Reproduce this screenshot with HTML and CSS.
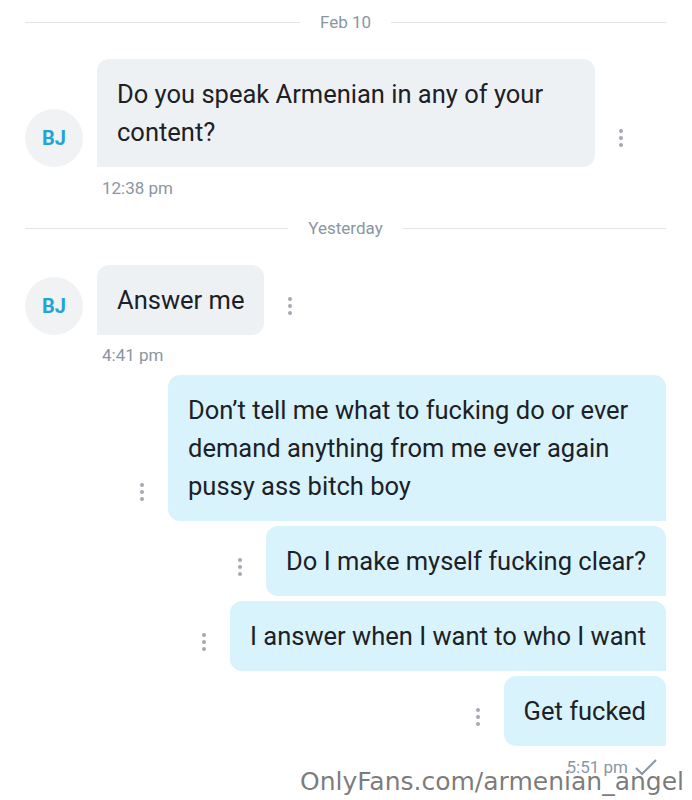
FILE: index.html
```html
<!DOCTYPE html>
<html>
<head>
  <title>Messages</title>
  <link rel="stylesheet" href="styles.css">
</head>
<body>
  <div class="screen">
    <div class="divider"><span>Feb 10</span></div>

    <div class="row in">
      <div class="avatar">BJ</div>
      <div class="bubble">Do you speak Armenian in any of your content?</div>
      <div class="more"><i></i><i></i><i></i></div>
    </div>
    <div class="time in-time">12:38 pm</div>

    <div class="divider"><span>Yesterday</span></div>

    <div class="row in">
      <div class="avatar">BJ</div>
      <div class="bubble">Answer me</div>
      <div class="more"><i></i><i></i><i></i></div>
    </div>
    <div class="time in-time short">4:41 pm</div>

    <div class="row out">
      <div class="more"><i></i><i></i><i></i></div>
      <div class="bubble">Don’t tell me what to fucking do or ever demand anything from me ever again pussy ass bitch boy</div>
    </div>
    <div class="row out">
      <div class="more"><i></i><i></i><i></i></div>
      <div class="bubble">Do I make myself fucking clear?</div>
    </div>
    <div class="row out">
      <div class="more"><i></i><i></i><i></i></div>
      <div class="bubble">I answer when I want to who I want</div>
    </div>
    <div class="row out">
      <div class="more"><i></i><i></i><i></i></div>
      <div class="bubble">Get fucked</div>
    </div>
    <div class="time out-time">
      5:51 pm
      <svg width="24" height="18" viewBox="0 0 24 18">
        <polyline points="2,10 8,16 22,2" fill="none" stroke="#8a96a3" stroke-width="2"/>
      </svg>
    </div>

    <div class="watermark">OnlyFans.com/armenian_angel</div>
  </div>
</body>
</html>
```

FILE: styles.css
```css
body {
  margin: 0;
  background-color: #fff;
  font-family: Roboto, "Liberation Sans", sans-serif;
}
.screen {
  position: relative;
  height: 800px;
  padding: 0 26px 0 25px;
  overflow: hidden;
}
.divider {
  display: flex;
  align-items: center;
  height: 44px;
  color: #8a96a3;
  font-size: 17px;
}
.divider::before,
.divider::after {
  content: "";
  flex: 1;
  height: 1px;
  background-color: #e1e4e8;
}
.divider span {
  margin: 0 20px;
}
.divider + .row {
  margin-top: 15px;
}
.time + .divider {
  margin-top: 8px;
}
.row {
  display: flex;
  align-items: flex-end;
}
.row.out {
  justify-content: flex-end;
  margin-top: 5px;
}
.avatar {
  width: 58px;
  height: 58px;
  border-radius: 50%;
  background-color: #f0f2f4;
  color: #1ea5d6;
  font-weight: bold;
  font-size: 20px;
  display: flex;
  align-items: center;
  justify-content: center;
  margin-right: 14px;
  flex-shrink: 0;
}
.bubble {
  max-width: 458px;
  padding: 16px 20px;
  font-size: 25.5px;
  line-height: 38px;
  color: #1b2127;
  border-radius: 12px;
}
.in .bubble {
  background-color: #eef1f4;
  border-bottom-left-radius: 0;
}
.out .bubble {
  background-color: #d9f3fd;
  border-bottom-right-radius: 0;
}
.more {
  width: 52px;
  display: flex;
  flex-direction: column;
  align-items: center;
  gap: 3px;
  margin-bottom: 20px;
}
.more i {
  width: 4px;
  height: 4px;
  border-radius: 50%;
  background-color: #a3a9b0;
}
.time {
  color: #8a96a3;
  font-size: 17px;
  line-height: 20px;
}
.in-time {
  margin-top: 11px;
  padding-left: 77px;
}
.in-time.short {
  margin-top: 10px;
  margin-bottom: 10px;
}
.out-time {
  display: flex;
  justify-content: flex-end;
  align-items: center;
  gap: 6px;
  margin-top: 11px;
  padding-right: 8px;
}
.watermark {
  position: absolute;
  right: 8px;
  bottom: 4px;
  font-family: "DejaVu Sans", sans-serif;
  font-size: 25px;
  color: rgba(100, 100, 100, 0.85);
  text-shadow: 0 0 2px #fff, 0 0 2px #fff;
}
```
